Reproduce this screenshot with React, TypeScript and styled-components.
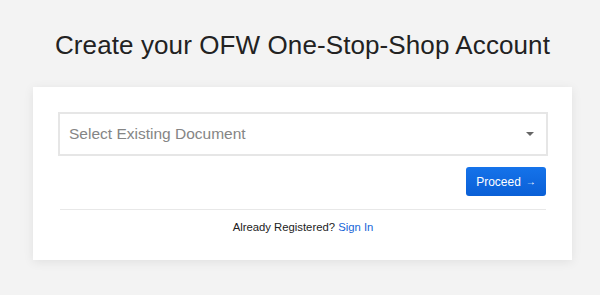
import React from 'react';
import styled, { createGlobalStyle } from 'styled-components';

const GlobalStyle = createGlobalStyle`
  html, body {
    margin: 0;
    padding: 0;
    background: #f3f3f3;
    font-family: 'Liberation Sans', Arial, sans-serif;
  }
`;

const Page = styled.div`
  width: 600px;
  height: 295px;
  display: flex;
  flex-direction: column;
  align-items: center;
  padding-left: 5px;
  box-sizing: border-box;
`;

const Title = styled.h1`
  margin: 29px 0 0;
  height: 32px;
  line-height: 32px;
  font-size: 26px;
  font-weight: 400;
  color: #222;
  letter-spacing: 0.1px;
  white-space: nowrap;
`;

const Card = styled.div`
  margin-top: 26px;
  width: 539px;
  height: 173px;
  box-sizing: border-box;
  background: #fff;
  padding: 25px 24px 0 25px;
  box-shadow: 0 2px 10px rgba(0, 0, 0, 0.08);
  display: flex;
  flex-direction: column;
`;

const Select = styled.div`
  height: 44px;
  box-sizing: border-box;
  border: 2px solid #e6e6e6;
  display: flex;
  align-items: center;
  justify-content: space-between;
  padding: 0 12px 0 9px;
  font-size: 15.5px;
  color: #858585;
`;

const Caret = styled.span`
  width: 0;
  height: 0;
  border-left: 4px solid transparent;
  border-right: 4px solid transparent;
  border-top: 4px solid #666;
`;

const Actions = styled.div`
  display: flex;
  justify-content: flex-end;
  padding-right: 2px;
  margin-top: 11px;
`;

const Button = styled.button`
  width: 80px;
  height: 29px;
  border: none;
  border-radius: 3px;
  background: linear-gradient(#1573ea, #0a5fd6);
  color: #fff;
  font-family: inherit;
  font-size: 12px;
  display: flex;
  align-items: center;
  justify-content: center;
  gap: 5px;
  padding: 0;
`;

const Divider = styled.hr`
  margin: 13px 2px 0 2px;
  border: none;
  border-top: 1px solid #e8e8e8;
`;

const Footer = styled.p`
  margin: 11px 0 0;
  text-align: center;
  font-size: 11.3px;
  color: #222;
`;

const Link = styled.a`
  color: #1766d8;
  text-decoration: none;
`;

export default function App() {
  return (
    <Page>
      <GlobalStyle />
      <Title>Create your OFW One-Stop-Shop Account</Title>
      <Card>
        <Select>
          <span>Select Existing Document</span>
          <Caret />
        </Select>
        <Actions>
          <Button>
            Proceed <span style={{ fontSize: 10 }}>→</span>
          </Button>
        </Actions>
        <Divider />
        <Footer>
          Already Registered? <Link href="#">Sign In</Link>
        </Footer>
      </Card>
    </Page>
  );
}
